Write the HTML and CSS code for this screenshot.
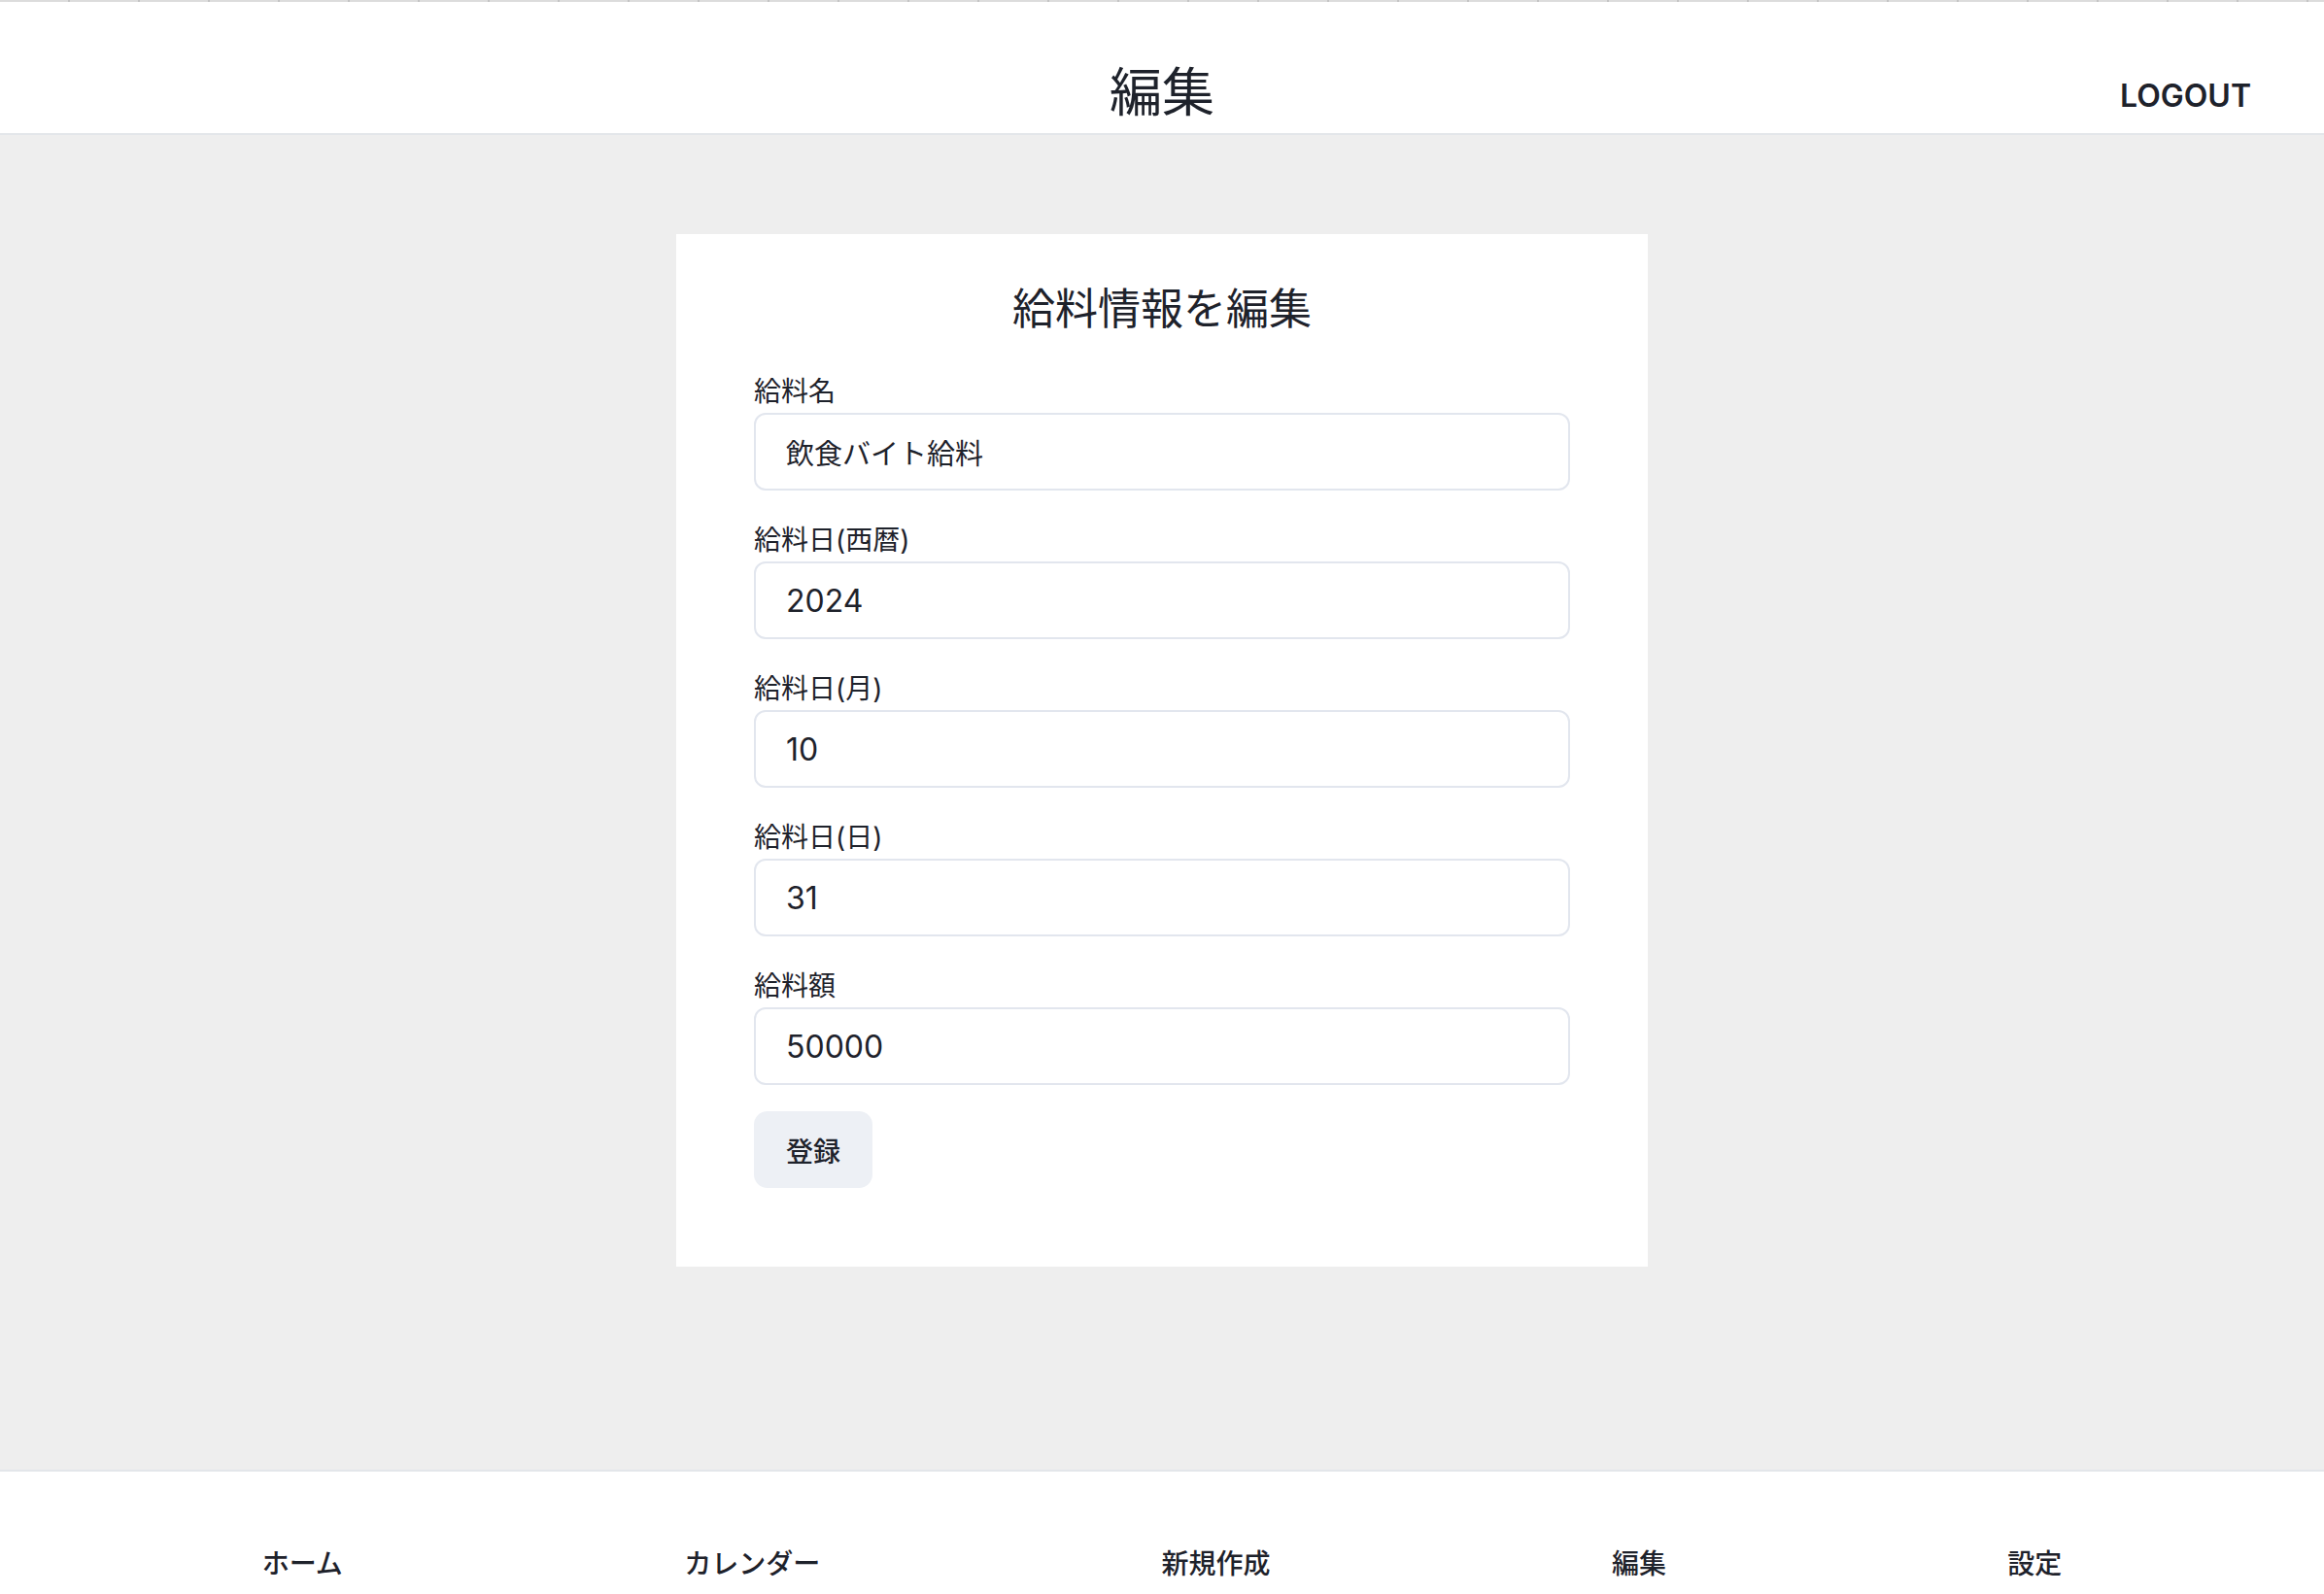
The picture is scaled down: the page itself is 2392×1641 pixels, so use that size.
FILE: index.html
```html
<!DOCTYPE html>
<html lang="ja">
<head>
    <meta charset="UTF-8">
    <title>編集</title>
    <link rel="stylesheet" href="styles.css">
</head>
<body>
    <div class="topline"></div>
    <header class="header">
        <div></div>
        <h1 class="page-title">編集</h1>
        <a href="#" class="logout">LOGOUT</a>
    </header>

    <main class="main">
        <form class="card">
            <h2 class="card-title">給料情報を編集</h2>

            <div class="field">
                <label for="name">給料名</label>
                <input id="name" class="text-jp" type="text" value="飲食バイト給料">
            </div>
            <div class="field">
                <label for="year">給料日(西暦)</label>
                <input id="year" type="text" value="2024">
            </div>
            <div class="field">
                <label for="month">給料日(月)</label>
                <input id="month" type="text" value="10">
            </div>
            <div class="field">
                <label for="day">給料日(日)</label>
                <input id="day" type="text" value="31">
            </div>
            <div class="field last">
                <label for="amount">給料額</label>
                <input id="amount" type="text" value="50000">
            </div>

            <button type="button" class="submit">登録</button>
        </form>
    </main>

    <footer class="footer">
        <nav class="nav">
            <a href="#">ホーム</a>
            <a href="#">カレンダー</a>
            <a href="#">新規作成</a>
            <a href="#">編集</a>
            <a href="#">設定</a>
        </nav>
    </footer>
</body>
</html>
```

FILE: styles.css
```css
* {
    box-sizing: border-box;
}

body {
    margin: 0;
    font-family: Inter, "Noto Sans CJK JP", sans-serif;
    color: #1e222b;
    background: #eeeeee;
    min-height: 100vh;
    display: flex;
    flex-direction: column;
}

.topline {
    height: 2px;
    background: repeating-linear-gradient(to right, #dcdcdc 0, #dcdcdc 70px, #c4c4c4 70px, #c4c4c4 72px);
}

.header {
    background: #fff;
    display: grid;
    grid-template-columns: 1fr auto 1fr;
    align-items: center;
    padding: 62px 75px 9px 75px;
    border-bottom: 2px solid #e3e6ea;
}

.page-title {
    margin: 0;
    font-size: 54px;
    font-weight: 400;
    line-height: 64px;
}

.logout {
    justify-self: end;
    font-size: 32px;
    font-weight: 600;
    color: #1e222b;
    text-decoration: none;
    padding-top: 4px;
}

.main {
    flex: 1;
    padding-top: 102px;
}

.card {
    width: 1000px;
    margin: 0 auto;
    background: #fff;
    padding: 47px 80px 81px;
}

.card-title {
    margin: 0 0 35px;
    text-align: center;
    font-size: 44px;
    font-weight: 400;
    line-height: 60px;
}

.field {
    margin-bottom: 31px;
}

.field.last {
    margin-bottom: 27px;
}

.field label {
    display: block;
    font-size: 28px;
    line-height: 40px;
    margin-bottom: 2px;
}

.field input {
    display: block;
    width: 100%;
    height: 80px;
    padding: 0 31px;
    border: 2px solid #e2e6ee;
    border-radius: 12px;
    font-family: inherit;
    font-size: 32px;
    color: #1e222b;
    background: #fff;
    outline: none;
}

.field input.text-jp {
    font-size: 29px;
}

.submit {
    height: 79px;
    padding: 0 33px;
    border: none;
    border-radius: 14px;
    background: #edf0f5;
    font-family: inherit;
    font-size: 28px;
    font-weight: 500;
    color: #1e222b;
    cursor: pointer;
}

.footer {
    flex-shrink: 0;
    height: 128px;
    background: #fff;
    border-top: 2px solid #e3e6ea;
    padding-top: 75px;
}

.nav {
    display: flex;
    justify-content: space-around;
    padding: 0 94px;
}

.nav a {
    font-size: 28px;
    font-weight: 500;
    line-height: 40px;
    color: #1e222b;
    text-decoration: none;
}
```
